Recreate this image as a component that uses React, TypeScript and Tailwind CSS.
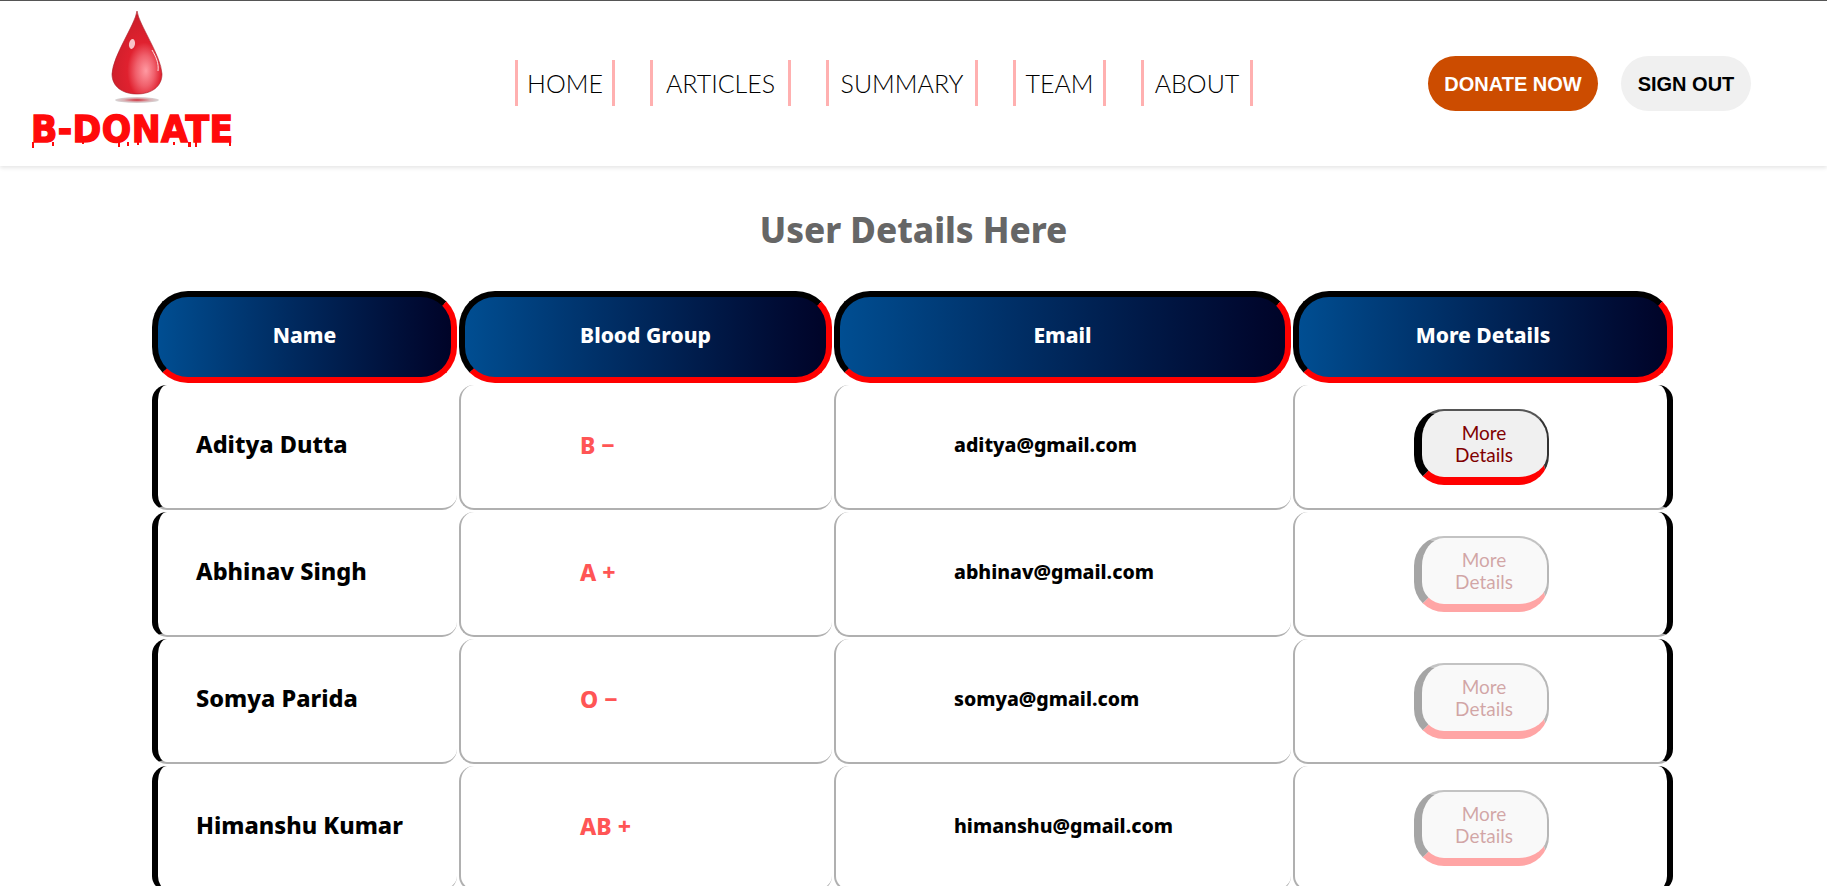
const users = [
  { name: 'Aditya Dutta', group: 'B −', email: 'aditya@gmail.com' },
  { name: 'Abhinav Singh', group: 'A +', email: 'abhinav@gmail.com' },
  { name: 'Somya Parida', group: 'O −', email: 'somya@gmail.com' },
  { name: 'Himanshu Kumar', group: 'AB +', email: 'himanshu@gmail.com' },
];

const navLinks = [
  { label: 'HOME', width: 'w-[100px]' },
  { label: 'ARTICLES', width: 'w-[141px]' },
  { label: 'SUMMARY', width: 'w-[152px]' },
  { label: 'TEAM', width: 'w-[93px]' },
  { label: 'ABOUT', width: 'w-[112px]' },
];
const headings = ['Name', 'Blood Group', 'Email', 'More Details'];

const Logo = () => (
  <div className="relative w-[201px] h-[137px] mt-[10px]">
    <svg className="absolute left-[78px] top-0" width="56" height="96" viewBox="0 0 56 96">
      <defs>
        <radialGradient id="dropFill" cx="0.62" cy="0.72" r="0.62" fx="0.68" fy="0.72">
          <stop offset="0" stopColor="#ff9aa2" />
          <stop offset="0.3" stopColor="#f0606c" />
          <stop offset="0.55" stopColor="#e0212f" />
          <stop offset="1" stopColor="#cf1f2b" />
        </radialGradient>
        <radialGradient id="dropShadow">
          <stop offset="0" stopColor="#d02a36" />
          <stop offset="0.6" stopColor="#d9b0b4" />
          <stop offset="1" stopColor="#d8d8d8" />
        </radialGradient>
      </defs>
      <path d="M28 0 C30 14 52 44 53 63 C53 76 42 83 28 83 C14 83 3 76 3 63 C4 44 26 14 28 0 Z" fill="url(#dropFill)" stroke="#a81c26" strokeWidth="0.6" />
      <ellipse cx="23" cy="33" rx="3" ry="5" fill="#f8c4c8" transform="rotate(10 23 33)" />
      <path d="M43 39 C47 46 50 52 49 60" fill="none" stroke="#ffe2e4" strokeWidth="1" />
      <ellipse cx="28" cy="89" rx="22" ry="3" fill="url(#dropShadow)" />
    </svg>
    <div className="absolute left-0 top-[96px] font-['DejaVu_Sans',sans-serif] font-bold text-[38px] leading-[44px] tracking-[0.5px] text-[#ff0a0a] whitespace-nowrap scale-x-[0.91] origin-left [-webkit-text-stroke:1.5px_#ff0a0a]">
      B-DONATE
    </div>
    <svg className="absolute left-0 top-[131px]" width="201" height="8" viewBox="0 0 201 8" fill="#ff0a0a">
      <rect x="1" y="0" width="2" height="6" />
      <rect x="21" y="0" width="2" height="4" />
      <rect x="51" y="0" width="2" height="2" />
      <rect x="87" y="0" width="2" height="5" />
      <rect x="96" y="0" width="2" height="4" />
      <rect x="106" y="0" width="2" height="3" />
      <rect x="142" y="0" width="2" height="3" />
      <rect x="157" y="0" width="3" height="5" />
      <rect x="164" y="0" width="2" height="5" />
      <rect x="198" y="0" width="2" height="4" />
    </svg>
  </div>
);

export default function App() {
  return (
    <div className="h-screen overflow-hidden bg-white border-t border-[#555] font-['Noto_Sans',sans-serif]">
      <header className="flex items-start h-[165px] pl-[31px] pr-[76px] shadow-[0_2px_4px_rgba(0,0,0,0.1)]">
        <Logo />
        <nav className="flex gap-[35px] ml-[283px] mt-[59px] font-['Lato',sans-serif]">
          {navLinks.map((link) => (
            <a key={link.label} className={`${link.width} flex items-center justify-center h-[46px] pt-[2px] border-x-[3px] border-[#ffb0b0] text-[25px] font-light text-black`}>
              {link.label}
            </a>
          ))}
        </nav>
        <div className="flex gap-[23px] ml-auto mt-[55px] font-['Liberation_Sans',sans-serif] font-bold text-[20px]">
          <button className="h-[55px] w-[170px] rounded-[28px] bg-[#cc4c00] text-white">DONATE NOW</button>
          <button className="h-[55px] w-[130px] rounded-[28px] bg-[#f0f0f0] text-black">SIGN OUT</button>
        </div>
      </header>

      <main>
        <h1 className="mt-[40px] mb-[35px] text-center text-[35px] leading-[48px] font-extrabold text-[#666]">User Details Here</h1>
        <table className="w-[1525px] ml-[150px] table-fixed border-separate border-spacing-[2px]">
          <colgroup>
            <col className="w-[305px]" />
            <col className="w-[373px]" />
            <col className="w-[457px]" />
            <col className="w-[380px]" />
          </colgroup>
          <thead>
            <tr>
              {headings.map((heading) => (
                <th key={heading} className="h-[92px] pb-[2px] rounded-[36px] border-[6px] border-t-black border-l-black border-r-[#f00] border-b-[#f00] bg-gradient-to-r from-[#004e92] to-[#000428] text-white text-[21px] font-extrabold text-center">
                  {heading}
                </th>
              ))}
            </tr>
          </thead>
          <tbody>
            {users.map((user, i) => (
              <tr key={user.email}>
                <td className="h-[125px] rounded-[15px] border-b-2 border-l-[6px] border-[#b0b0b0] border-l-black pl-[38px] pb-[3px] text-[23.5px] font-extrabold text-black">
                  {user.name}
                </td>
                <td className="h-[125px] rounded-[15px] border-b-2 border-l-2 border-[#b0b0b0] pl-[119px] pb-[3px] text-[23px] font-extrabold text-[#ff5555]">
                  {user.group}
                </td>
                <td className="h-[125px] rounded-[15px] border-b-2 border-l-2 border-[#b0b0b0] pl-[118px] pb-[4px] text-[19.5px] font-extrabold text-black">
                  {user.email}
                </td>
                <td className="h-[125px] rounded-[15px] border-b-2 border-l-2 border-r-[6px] border-[#b0b0b0] border-r-black text-center">
                  <button className={`w-[135px] h-[76px] px-[18px] rounded-[30px] border-2 border-t-[#555] border-r-[#333] border-b-[8px] border-l-[8px] border-b-[#f00] border-l-black bg-[#f0f0f0] text-[#800000] text-[19px] leading-[22px] font-['Lato',sans-serif] ${i === 0 ? '' : 'opacity-35'}`}>
                    More Details
                  </button>
                </td>
              </tr>
            ))}
          </tbody>
        </table>
      </main>
    </div>
  );
}
